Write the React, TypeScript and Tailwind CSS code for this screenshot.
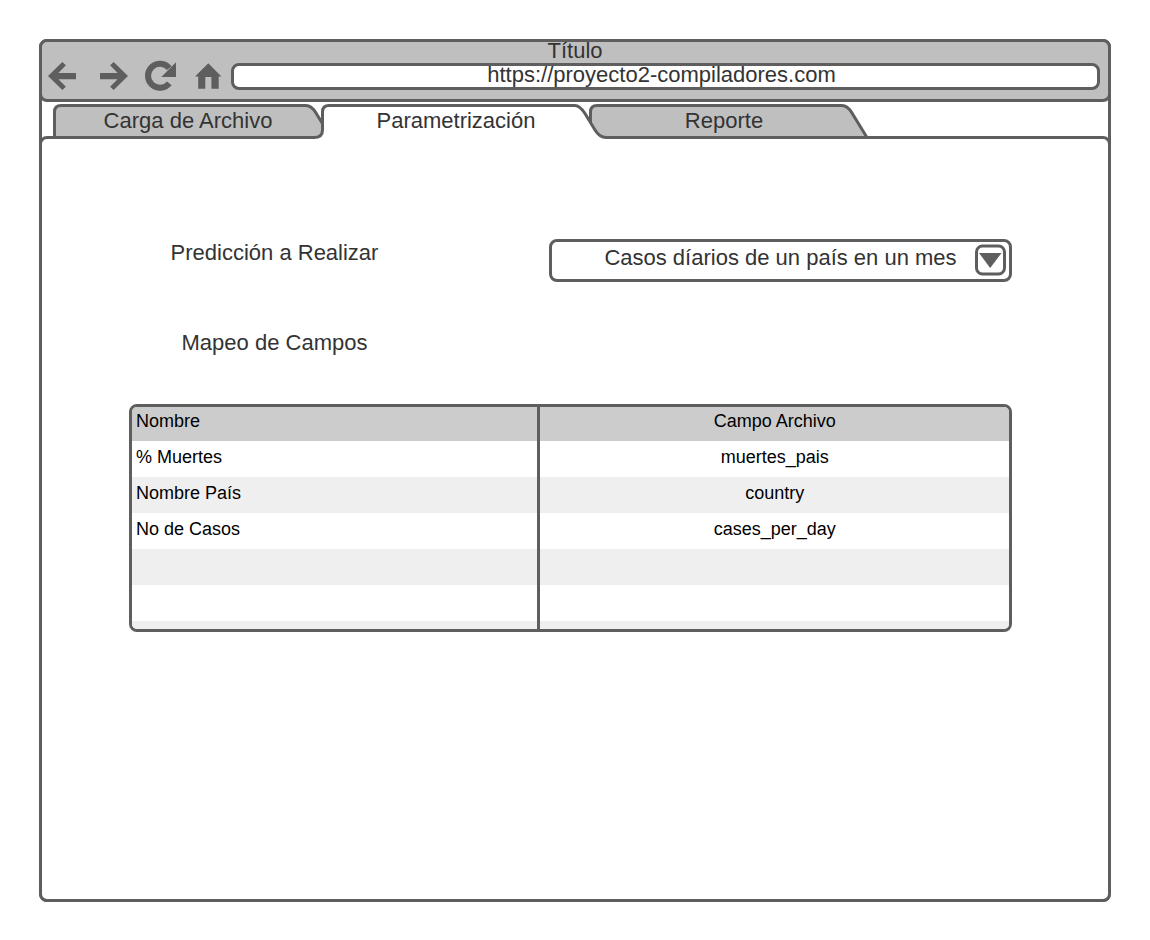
import { useState } from 'react';
import type { ReactNode } from 'react';

const STROKE = '#5e5e5e';

function NavButton({ label, width, children }: { label: string; width: string; children: ReactNode }) {
  return (
    <button type="button" aria-label={label} className={`h-8 shrink-0 ${width}`}>
      {children}
    </button>
  );
}

function BackIcon() {
  return (
    <svg viewBox="0 0 32 32" className="size-8" fill={STROKE} aria-hidden="true">
      <path d="M1 16 15.3 2l3.6 3.3-7.5 7.7H29v6.2H11.4l7.5 7.6-3.6 3.3z" />
    </svg>
  );
}

function ForwardIcon() {
  return (
    <svg viewBox="0 0 32 32" className="size-8" fill={STROKE} aria-hidden="true">
      <path d="M31 16 16.7 2l-3.6 3.3 7.5 7.7H3v6.2h17.6l-7.5 7.6 3.6 3.3z" />
    </svg>
  );
}

function ReloadIcon() {
  return (
    <svg viewBox="0 0 32 32" className="size-8" aria-hidden="true">
      <path d="M24.3 8.1A12 12 0 1 0 24.3 23.3" fill="none" stroke={STROKE} strokeWidth="6" />
      <path d="M31 2.3V17H16.3z" fill={STROKE} />
    </svg>
  );
}

function HomeIcon() {
  return (
    <svg viewBox="0 0 32 32" className="size-8" fill={STROKE} aria-hidden="true">
      <path d="M16.3 3.3 29.4 16.4h-2.7v12.4h-7.3V17h-6.1v11.8H6.2V16.4H3z" />
    </svg>
  );
}

function ActiveTabShape() {
  return (
    <svg viewBox="0 0 268 34" className="absolute inset-x-0 top-0 h-[34px] w-[268px] overflow-visible" aria-hidden="true">
      <path
        d="M-7 34.500V33.500Q0 33 .5 26V8Q.5 1.500 7 1.500H253C257 1.500 260 5 263 9.500L273 26Q277.500 33.500 284 33.500V36H-7z"
        fill="#fff"
      />
      <path
        d="M-8 33.500Q.5 33.500 .5 26V8Q.5 1.500 7 1.500H253C257 1.500 260 5 263 9.500L273 26Q277.500 33.500 284 33.500"
        fill="none"
        stroke={STROKE}
        strokeWidth="3"
      />
    </svg>
  );
}

function IdleTabShape() {
  return (
    <svg viewBox="0 0 268 34" className="absolute inset-x-0 top-0 h-[34px] w-[268px] overflow-visible" aria-hidden="true">
      <path
        d="M.5 34V8Q.5 1.500 7 1.500H252C256 1.500 259 4 262 9L277 33.500"
        fill="#bfbfbf"
        stroke={STROKE}
        strokeWidth="3"
      />
    </svg>
  );
}

const tabs = ['Carga de Archivo', 'Parametrización', 'Reporte'];

const predictions = [
  'Casos díarios de un país en un mes',
  'Predicción de muertes en un país',
  'Tendencia de casos por país',
];

const rows = [
  ['% Muertes', 'muertes_pais'],
  ['Nombre País', 'country'],
  ['No de Casos', 'cases_per_day'],
  ['', ''],
  ['', ''],
];

export default function App() {
  const [active, setActive] = useState(1);
  const [url, setUrl] = useState('https://proyecto2-compiladores.com');
  const [prediction, setPrediction] = useState(predictions[0]);

  return (
    <div className="flex min-h-screen flex-col bg-white px-[39px] pt-[39px] pb-[38px] font-['Liberation_Sans',Arial,sans-serif] text-[22px] leading-6 text-[#333]">
      <div className="flex flex-1 flex-col rounded-lg border-3 border-[#5e5e5e]">
        <header className="-mx-[3px] -mt-[3px] h-[63px] rounded-lg border-3 border-[#5e5e5e] bg-[#bfbfbf]">
          <h1 className="h-[18px] text-center leading-[18px]">Título</h1>
          <div className="flex items-center pr-2 pl-[5px]">
            <NavButton label="Atrás" width="w-[50px]">
              <BackIcon />
            </NavButton>
            <NavButton label="Adelante" width="w-[48px]">
              <ForwardIcon />
            </NavButton>
            <NavButton label="Recargar" width="w-[47px]">
              <ReloadIcon />
            </NavButton>
            <NavButton label="Inicio" width="w-[39px]">
              <HomeIcon />
            </NavButton>
            <input
              type="text"
              aria-label="Dirección"
              value={url}
              onChange={(e) => setUrl(e.target.value)}
              className="h-[27px] min-w-0 flex-1 rounded-lg border-3 border-[#5e5e5e] bg-white pr-2 pb-[3px] text-center leading-5 outline-none"
            />
          </div>
        </header>

        <nav role="tablist" className="flex h-[34px] pt-[2px] pl-3">
          {tabs.map((tab, i) => (
            <button
              key={tab}
              type="button"
              role="tab"
              aria-selected={i === active}
              onClick={() => setActive(i)}
              className={`relative h-[34px] w-[268px] shrink-0 ${i === active ? 'z-10' : ''}`}
            >
              {i === active ? <ActiveTabShape /> : <IdleTabShape />}
              <span className="relative">{tab}</span>
            </button>
          ))}
        </nav>

        <main className="relative -mx-[3px] -mb-[3px] flex-1 rounded-lg border-3 border-[#5e5e5e] bg-white pt-[100px] pr-24 pl-[87px]">
          <div className="flex items-start justify-between">
            <label htmlFor="prediccion" className="w-[291px] pt-[2px] text-center">
              Predicción a Realizar
            </label>
            <div className="relative w-[463px]">
              <select
                id="prediccion"
                value={prediction}
                onChange={(e) => setPrediction(e.target.value)}
                className="h-[43px] w-full appearance-none rounded-lg border-3 border-[#5e5e5e] bg-white pb-[6px] text-center [text-align-last:center] outline-none"
              >
                {predictions.map((p) => (
                  <option key={p}>{p}</option>
                ))}
              </select>
              <svg viewBox="0 0 32 32" className="pointer-events-none absolute top-[5px] right-[5px] size-8" aria-hidden="true">
                <rect x="1.500" y="2" width="28" height="28" rx="6" fill="#fff" stroke={STROKE} strokeWidth="3" />
                <path d="M4 9h22.500L15.200 24z" fill={STROKE} />
              </svg>
            </div>
          </div>

          <h2 id="mapeo" className="mt-[49px] w-[291px] text-center">
            Mapeo de Campos
          </h2>

          <div className="mt-[49px] overflow-hidden rounded-lg border-3 border-[#5e5e5e]">
            <table aria-labelledby="mapeo" className="w-full table-fixed text-lg leading-5 text-black">
              <colgroup>
                <col className="w-[46.4%]" />
                <col />
              </colgroup>
              <thead>
                <tr className="h-[34px] bg-[#ccc] align-top">
                  <th className="border-r-3 border-[#5e5e5e] pt-1 pl-1 text-left font-normal">Nombre</th>
                  <th className="pt-1 font-normal">Campo Archivo</th>
                </tr>
              </thead>
              <tbody>
                {rows.map(([name, field], i) => (
                  <tr key={i} className="h-9 align-top even:bg-[#efefef]">
                    <td className="border-r-3 border-[#5e5e5e] pt-[6px] pl-1">{name}</td>
                    <td className="pt-[6px] text-center">{field}</td>
                  </tr>
                ))}
                <tr className="h-2 bg-[#efefef]">
                  <td className="border-r-3 border-[#5e5e5e]" />
                  <td />
                </tr>
              </tbody>
            </table>
          </div>
        </main>
      </div>
    </div>
  );
}
